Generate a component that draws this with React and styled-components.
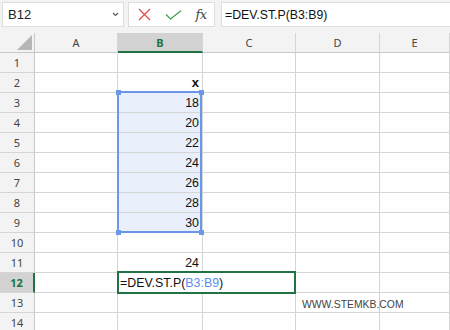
import React from 'react';
import styled, { createGlobalStyle } from 'styled-components';

const GREEN = '#217346';
const SEL = '#6a97e8';

const GlobalStyle = createGlobalStyle`
  html, body {
    margin: 0;
    padding: 0;
    background: #ffffff;
    overflow: hidden;
  }
  * { box-sizing: border-box; }
`;

const Page = styled.div`
  width: 450px;
  height: 330px;
  overflow: hidden;
  font-family: "Liberation Sans", Arial, sans-serif;
`;

const Toolbar = styled.div`
  display: flex;
  align-items: flex-start;
  height: 33px;
  padding: 2px 0 0 2px;
  background: #f3f3f3;
`;

const Box = styled.div`
  display: flex;
  align-items: center;
  height: 25px;
  background: #ffffff;
  border: 1px solid #dedede;
`;

const NameBox = styled(Box)`
  width: 122px;
  padding: 0 4px 0 5px;
  justify-content: space-between;
  font-size: 13px;
  color: #222;
`;

const ButtonBox = styled(Box)`
  width: 87px;
  margin-left: 4px;
  padding-left: 3px;
`;

const IconSlot = styled.span`
  display: flex;
  align-items: center;
  justify-content: center;
  width: ${p => p.$w}px;
`;

const Fx = styled.span`
  font-family: "DejaVu Serif", "Liberation Serif", serif;
  font-style: italic;
  font-size: 13px;
  color: #444;
  letter-spacing: -0.5px;
`;

const FormulaBox = styled(Box)`
  flex: 1;
  margin-left: 6px;
  padding-left: 3px;
  font-size: 12.3px;
  color: #111;
  border-right: none;
`;

const GridWrap = styled.div`
  position: relative;
`;

const Grid = styled.div`
  display: grid;
  grid-template-columns: 35px 83px 85px 93px 84px 1fr;
  grid-auto-rows: 20px;
  background: #fff;
`;

const Corner = styled.div`
  position: relative;
  background: #f3f3f3;
  border-right: 1px solid #c8c8c8;
  border-bottom: 1px solid #c8c8c8;
`;

const ColHead = styled.div`
  display: flex;
  align-items: center;
  justify-content: center;
  font-family: "Noto Sans", "Open Sans", sans-serif;
  font-size: 11px;
  color: ${p => (p.$active ? GREEN : '#444')};
  font-weight: ${p => (p.$active ? 700 : 400)};
  background: ${p => (p.$active ? '#d2d2d2' : '#f3f3f3')};
  border-right: 1px solid #d5d5d5;
  border-bottom: ${p => (p.$active ? `2px solid ${GREEN}` : '1px solid #c8c8c8')};
`;

const RowHead = styled.div`
  display: flex;
  align-items: center;
  justify-content: center;
  font-family: "Noto Sans", "Open Sans", sans-serif;
  font-size: 11px;
  color: ${p => (p.$active ? GREEN : '#444')};
  font-weight: ${p => (p.$active ? 700 : 400)};
  background: ${p => (p.$active ? '#d2d2d2' : '#f3f3f3')};
  border-right: ${p => (p.$active ? `2px solid ${GREEN}` : '1px solid #c8c8c8')};
  border-bottom: 1px solid #d5d5d5;
`;

const Cell = styled.div`
  display: flex;
  align-items: flex-end;
  justify-content: ${p => (p.$right ? 'flex-end' : 'flex-start')};
  padding: 0 ${p => (p.$right ? 3 : 0)}px 2px ${p => (p.$indent ? 6 : 2)}px;
  font-size: ${p => (p.$small ? '10.4px' : p.$bold ? '13px' : '12.4px')};
  font-weight: ${p => (p.$bold ? 700 : 400)};
  color: ${p => (p.$small ? '#444' : '#111')};
  background: ${p => (p.$fill ? '#e9effb' : '#fff')};
  border-right: 1px solid #d5d5d5;
  border-bottom: 1px solid #d5d5d5;
  white-space: nowrap;
  ${p => (p.$small ? 'position: relative; z-index: 1; overflow: visible; background: transparent;' : '')}
`;

const Selection = styled.div`
  position: absolute;
  left: 117px;
  top: 58px;
  width: 85px;
  height: 142px;
  border: 2px solid ${SEL};
  pointer-events: none;
`;

const Handle = styled.span`
  position: absolute;
  width: 5px;
  height: 5px;
  background: ${SEL};
  ${p => (p.$top ? 'top: -3.5px;' : 'bottom: -3.5px;')}
  ${p => (p.$left ? 'left: -3.5px;' : 'right: -3.5px;')}
`;

const EditBox = styled.div`
  position: absolute;
  left: 117px;
  top: 238px;
  width: 179px;
  height: 23px;
  border: 2px solid ${GREEN};
  background: #fff;
  display: flex;
  align-items: center;
  padding-left: 1px;
  font-size: 12.4px;
  color: #111;
`;

const Ref = styled.span`
  color: #5b8ef0;
`;

const Triangle = styled.span`
  position: absolute;
  right: 2px;
  bottom: 2px;
  width: 0;
  height: 0;
  border-left: 15px solid transparent;
  border-bottom: 15px solid #b5b5b5;
`;

const cols = ['A', 'B', 'C', 'D', 'E'];

const data = {
  B2: { v: 'x', bold: true, right: true },
  B3: { v: 18, right: true },
  B4: { v: 20, right: true },
  B5: { v: 22, right: true },
  B6: { v: 24, right: true },
  B7: { v: 26, right: true },
  B8: { v: 28, right: true },
  B9: { v: 30, right: true },
  B11: { v: 24, right: true },
  D13: { v: 'WWW.STEMKB.COM', small: true, indent: true },
};

const Cross = () => (
  <svg width="13" height="13" viewBox="0 0 13 13">
    <path d="M1 1 L12 12 M12 1 L1 12" stroke="#e4484d" strokeWidth="1.2" fill="none" />
  </svg>
);

const Check = () => (
  <svg width="17" height="10" viewBox="0 0 17 10">
    <path d="M1 4.5 L5.5 9 L16 0.8" stroke="#3b9c4a" strokeWidth="1.2" fill="none" />
  </svg>
);

const Chevron = () => (
  <svg width="7" height="5" viewBox="0 0 7 5">
    <path d="M1 1 L3.5 3.5 L6 1" stroke="#555" strokeWidth="1.1" fill="none" />
  </svg>
);

const App = () => {
  const rows = Array.from({ length: 14 }, (_, i) => i + 1);
  return (
    <Page>
      <GlobalStyle />
      <Toolbar>
        <NameBox>
          <span>B12</span>
          <Chevron />
        </NameBox>
        <ButtonBox>
          <IconSlot $w={24}><Cross /></IconSlot>
          <IconSlot $w={34}><Check /></IconSlot>
          <IconSlot $w={22}><Fx>fx</Fx></IconSlot>
        </ButtonBox>
        <FormulaBox>=DEV.ST.P(B3:B9)</FormulaBox>
      </Toolbar>
      <GridWrap>
        <Grid>
          <Corner><Triangle /></Corner>
          {cols.map(c => (
            <ColHead key={c} $active={c === 'B'}>{c}</ColHead>
          ))}
          {rows.map(r => (
            <React.Fragment key={r}>
              <RowHead $active={r === 12}>{r}</RowHead>
              {cols.map(c => {
                const d = data[c + r] || {};
                return (
                  <Cell
                    key={c}
                    $right={d.right}
                    $bold={d.bold}
                    $small={d.small}
                    $indent={d.indent}
                    $fill={c === 'B' && r >= 3 && r <= 9}
                  >
                    {d.v}
                  </Cell>
                );
              })}
            </React.Fragment>
          ))}
        </Grid>
        <Selection>
          <Handle $top $left />
          <Handle $top />
          <Handle $left />
          <Handle />
        </Selection>
        <EditBox>
          =DEV.ST.P(<Ref>B3:B9</Ref>)
        </EditBox>
      </GridWrap>
    </Page>
  );
};

export default App;
